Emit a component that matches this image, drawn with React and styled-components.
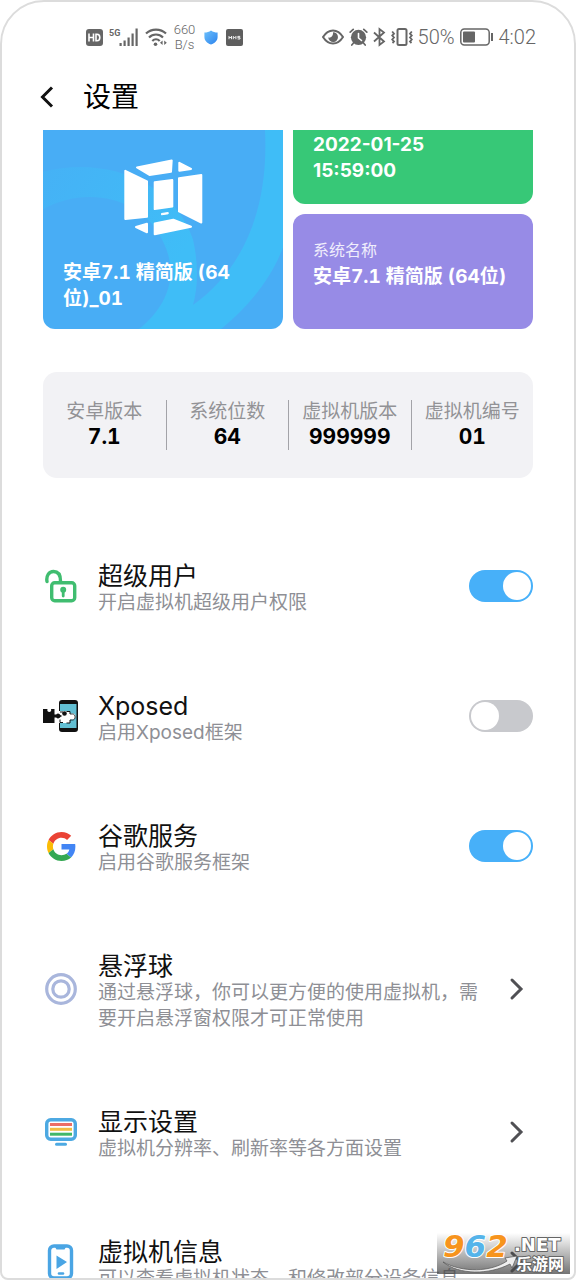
import { useState } from "react";
import styled, { createGlobalStyle, css } from "styled-components";

const GlobalStyle = createGlobalStyle`
  * {
    box-sizing: border-box;
  }
  body {
    margin: 0;
    background: #fff;
    font-family: Inter, "Noto Sans CJK SC", sans-serif;
    color: #000;
  }
`;

const Screen = styled.div`
  position: relative;
  height: 100vh;
  border: 2px solid #dcdcdc;
  border-radius: 44px 44px 8px 8px;
  overflow: hidden;
  display: flex;
  flex-direction: column;
`;

const StatusBar = styled.header`
  display: flex;
  justify-content: space-between;
  align-items: center;
  height: 44px;
  margin-top: 13px;
  padding: 0 38px 0 84px;
  flex-shrink: 0;
  color: #666;
`;

const StatusGroup = styled.div`
  display: flex;
  align-items: center;
  gap: ${(props) => props.$gap}px;
`;

const Speed = styled.span`
  width: 23px;
  font-family: Roboto, sans-serif;
  font-size: 13px;
  font-weight: 300;
  line-height: 15px;
  text-align: center;
`;

const StatusText = styled.span`
  font-family: Roboto, sans-serif;
  font-weight: 300;
  font-size: 20px;
  line-height: 24px;
`;

const TitleBar = styled.div`
  display: flex;
  align-items: center;
  gap: 28px;
  height: 71px;
  padding: 4px 37px 0;
  flex-shrink: 0;
`;

const BackButton = styled.button`
  display: flex;
  padding: 0;
  border: 0;
  background: none;
  color: #111;
`;

const Title = styled.h1`
  margin: 0;
  font-size: 28px;
  line-height: 40px;
  font-weight: 400;
`;

const Content = styled.main`
  flex: 1;
  min-height: 0;
  overflow: hidden;
  padding: 0 41px;
`;

const Cards = styled.section`
  display: grid;
  grid-template-columns: 1fr 1fr;
  grid-template-rows: 74px 115px;
  gap: 10px;
`;

const Card = styled.div`
  display: flex;
  flex-direction: column;
  justify-content: ${(props) => props.$justify || "flex-start"};
  padding: ${(props) => props.$pad};
  border-radius: ${(props) => (props.$cut ? "0 0 12px 12px" : "12px")};
  background: ${(props) => props.$color};
  color: #fff;
`;

const SystemCard = styled(Card)`
  position: relative;
  grid-row: span 2;
  overflow: hidden;
`;

const CardWave = styled.svg`
  position: absolute;
  inset: 0;
  width: 100%;
  height: 100%;
`;

const CardLogo = styled.svg`
  position: relative;
  align-self: center;
  margin-bottom: 23px;
`;

const CardText = styled.div`
  position: relative;
  font-size: 19px;
  line-height: 26px;
  font-weight: 700;
  font-variant-numeric: ${(props) => (props.$tabular ? "tabular-nums" : "normal")};
`;

const CardLabel = styled.div`
  font-size: 16px;
  line-height: 28px;
  opacity: 0.85;
`;

const Stats = styled.dl`
  display: grid;
  grid-template-columns: repeat(4, 1fr);
  margin: 43px 0 0;
  padding: 28px 0;
  border-radius: 14px;
  background: #f2f2f5;
`;

const Stat = styled.div`
  height: 50px;
  text-align: center;
  white-space: nowrap;

  & + & {
    border-left: 1px solid #a3a3a8;
  }
`;

const StatLabel = styled.dt`
  font-size: 19px;
  line-height: 24px;
  color: #929296;
`;

const StatValue = styled.dd`
  margin: 0;
  font-size: 21px;
  line-height: 26px;
  font-weight: 700;
  font-variant-numeric: tabular-nums;
`;

const List = styled.ul`
  list-style: none;
  margin: 78px 0 0;
  padding: 0;
  display: flex;
  flex-direction: column;
  gap: 70px;
`;

const rowStyle = css`
  display: flex;
  align-items: center;
  width: 100%;
  color: inherit;
  text-decoration: none;
`;

const RowLabel = styled.label`
  ${rowStyle}
`;

const RowLink = styled.a`
  ${rowStyle}
`;

const RowIcon = styled.span`
  display: flex;
  justify-content: center;
  width: 36px;
  margin-right: 19px;
  flex-shrink: 0;
`;

const RowText = styled.span`
  display: flex;
  flex-direction: column;
  flex: 1;
  min-width: 0;
  max-width: 394px;
  padding-top: 6px;
`;

const RowTitle = styled.span`
  font-size: 25px;
  line-height: 28px;
  color: #111;
`;

const RowHint = styled.span`
  font-size: 19px;
  line-height: 26px;
  color: #8e8f95;
`;

const Switch = styled.input`
  appearance: none;
  display: flex;
  align-items: center;
  width: 64px;
  height: 32px;
  margin: 0 0 0 auto;
  padding: 0 2px;
  border-radius: 16px;
  background: #c8c9cd;
  flex-shrink: 0;

  &::before {
    content: "";
    width: 28px;
    height: 28px;
    border-radius: 50%;
    background: #fff;
  }

  &:checked {
    background: #47b0f9;
  }

  &:checked::before {
    margin-left: auto;
  }
`;

const Arrow = styled.svg`
  margin: 0 8px 0 auto;
  flex-shrink: 0;
`;

const Watermark = styled.div`
  position: absolute;
  right: 4px;
  bottom: 4px;
  display: flex;
  width: 133px;
  height: 41px;
  background: linear-gradient(rgba(255, 255, 255, 0), rgba(70, 70, 70, 0.75));
`;

const HdIcon = () => (
  <svg width="17" height="17" viewBox="0 0 17 17">
    <rect width="17" height="17" rx="3" fill="#666" />
    <path d="M3 4.500v8M7.500 4.500v8M3 8.500h4.500M10 5.200v6.600h1c1.800 0 2.800-1.200 2.800-3.300s-1-3.300-2.800-3.300z" fill="none" stroke="#fff" strokeWidth="1.600" />
  </svg>
);

const SignalIcon = () => (
  <svg width="30" height="20" viewBox="0 0 30 20" fill="#666">
    <text x="0" y="9" fontFamily="Roboto" fontSize="9" fontWeight="700">
      5G
    </text>
    <path d="M10.500 16h2.200v3h-2.200zM14.500 13.500h2.200V19h-2.200zM18.500 10.500h2.200V19h-2.200zM22.500 6.500h2.200V19h-2.200zM26.500 1.500h2.200V19h-2.200z" />
  </svg>
);

const WifiIcon = () => (
  <svg width="22" height="20" viewBox="0 0 22 20" fill="none" stroke="#666" strokeWidth="2.200">
    <path d="M1 6.500c5.500-5.300 14.500-5.300 20 0M4 10.500c4-4 10-4 14 0M7.300 14c2.200-2.200 5.200-2.200 7.400 0" />
    <circle cx="10.500" cy="17.200" r="1.800" fill="#666" stroke="none" />
    <path d="M17.600 13.500v4.500l-2.600-2.200zM19.200 13.500v4.500l2.600-2.200z" fill="#666" stroke="none" />
  </svg>
);

const ShieldIcon = () => (
  <svg width="18" height="15" viewBox="-2 0 18 15">
    <defs>
      <linearGradient id="shield" x1="0" y1="0" x2="1" y2="1">
        <stop offset="0" stopColor="#6cc0fb" />
        <stop offset="1" stopColor="#2c83ee" />
      </linearGradient>
    </defs>
    <path d="M7 .5C9 2 11 2.500 13.600 2.600V7c0 3.500-2.500 6-6.600 7.500C2.900 13 .4 10.500.4 7V2.600C3 2.500 5 2 7 .5z" fill="url(#shield)" />
  </svg>
);

const HmsIcon = () => (
  <svg width="17" height="17" viewBox="0 0 17 17">
    <rect width="17" height="17" rx="2" fill="#5e5e5e" />
    <path d="M3 7v3.200M5.500 7v3.200M3 8.500h2.500M7.300 10.200V7.400l1.300 1.500 1.300-1.500v2.800M14.200 7.400h-2.400v1.300h2.200v1.300h-2.400" fill="none" stroke="#eee" strokeWidth="1" />
  </svg>
);

const EyeIcon = () => (
  <svg width="22" height="16" viewBox="0 0 22 16" fill="none" stroke="#666" strokeWidth="2">
    <path d="M1 8C3.500 4 7 1.500 11 1.500S18.500 4 21 8c-2.500 4-6 6.500-10 6.500S3.500 12 1 8z" />
    <path d="M11 3.200a4.900 4.900 0 1 1-4.800 5.300c2.800.8 5.300-2 4.800-5.300z" fill="#666" stroke="none" />
  </svg>
);

const AlarmIcon = () => (
  <svg width="19" height="18" viewBox="0 0 19 18" fill="none" stroke="#666" strokeWidth="1.700" strokeLinecap="round">
    <circle cx="9.500" cy="9.300" r="7.600" fill="#666" stroke="none" />
    <path d="M1.200 4.200 4.200 1.400M17.800 4.200 14.800 1.400M4.500 15 2.800 17M14.500 15 16.200 17" />
    <path d="M9.500 5.500V10l3 2.500" stroke="#fff" strokeWidth="1.600" />
  </svg>
);

const BluetoothIcon = () => (
  <svg width="13" height="20" viewBox="0 0 13 20" fill="none" stroke="#666" strokeWidth="1.800">
    <path d="M1 5.500 11 14.500 6.500 18V2L11 5.500 1 14.500" />
  </svg>
);

const VibrateIcon = () => (
  <svg width="22" height="18" viewBox="0 0 22 18" fill="none" stroke="#666" strokeWidth="2">
    <rect x="6.500" y="1" width="9" height="16" rx="1.500" />
    <path d="M1.200 3.500 3 5.700 1.200 7.500 3 9.500 1.200 11.500 3 13.500 1.500 15M20.800 3.500 19 5.700 20.800 7.500 19 9.500 20.800 11.500 19 13.500 20.500 15" strokeWidth="1.800" />
  </svg>
);

const BatteryIcon = () => (
  <svg width="34" height="18" viewBox="0 0 34 18">
    <rect x=".8" y="1" width="28.400" height="16" rx="3.500" fill="none" stroke="#666" strokeWidth="1.500" />
    <rect x="3" y="3.500" width="12" height="11" rx="1" fill="#666" />
    <path d="M32 5v8" stroke="#666" strokeWidth="2" />
  </svg>
);

const CubeLogo = () => (
  <CardLogo width="80" height="80" viewBox="0 0 80 80" fill="#fff" stroke="#fff" strokeWidth="2" strokeLinejoin="round">
    <path d="M14 10.500 48.700 3.500 48 14.800 26.500 18zM56.300 5.800 68 12l-11.700 1.700z" />
    <path d="M2.300 13.800 24 24.300v35.500L2.300 62zM56 21.200 78.300 18v47.500L56 54.400z" />
    <path d="M31.700 25.200 49.300 23v26.500L31.700 52zM31.700 66.500 50.300 62.700 68 69.700 31.700 77.200zM13 70l11-3.200v8.500z" />
    <path d="M38.500 56.500 45.200 55.500v1.300l-6.700 1z" strokeWidth="1" />
  </CardLogo>
);

const LockIcon = () => (
  <svg width="32" height="34" viewBox="0 0 32 34" fill="none" stroke="#40bd70" strokeWidth="3.400" strokeLinecap="round">
    <rect x="6.700" y="13.700" width="23" height="18" rx="3" />
    <path d="M2 12.500C1 7 4 2.500 8.500 2.500c4.500 0 7 3.500 7 9.500" />
    <path d="M18.200 21.500v5.500" strokeWidth="2.800" />
    <circle cx="18.200" cy="20.800" r="1.800" strokeWidth="2.400" />
  </svg>
);

const XposedIcon = () => (
  <svg width="36" height="32" viewBox="0 0 36 32">
    <rect x="16" y="0" width="19" height="32" rx="3" fill="#111" />
    <path d="M17 4h16.500v24H17z" fill="#62bfd3" />
    <path d="M15 11h12v2.500h3c3.500 0 3.500 6 0 6h-3V23H15z" fill="#fff" />
    <path d="M17 12h3M23.500 11.500H27v2.500M27 20v3h-3.500M20 22.500h-3v-3" fill="none" stroke="#111" />
    <path d="M27 14h2.500c3.500 0 3.500 6 0 6H27" fill="none" stroke="#111" strokeWidth=".8" />
    <circle cx="21.500" cy="13.500" r="2.300" fill="#111" />
    <path d="M0 9h4.500c-1.500 4 5 4 3.500 0h3.500v5.500h1.700a2.400 2.400 0 1 1 0 3h-1.700V23H0z" fill="#111" />
    <path d="M16 16h2.500" stroke="#111" strokeWidth="1.500" />
  </svg>
);

const GoogleIcon = () => (
  <svg width="29" height="29" viewBox="0 0 48 48">
    <path fill="#EA4335" d="M24 9.500c3.540 0 6.710 1.220 9.210 3.600l6.850-6.850C35.900 2.380 30.470 0 24 0 14.620 0 6.510 5.380 2.560 13.220l7.980 6.190C12.430 13.720 17.740 9.500 24 9.500z" />
    <path fill="#4285F4" d="M46.980 24.550c0-1.570-.15-3.090-.38-4.550H24v9.020h12.940c-.58 2.960-2.260 5.480-4.780 7.180l7.730 6c4.510-4.180 7.090-10.360 7.090-17.650z" />
    <path fill="#FBBC05" d="M10.530 28.590c-.48-1.450-.76-2.990-.76-4.590s.27-3.140.76-4.590l-7.980-6.190C.92 16.460 0 20.120 0 24c0 3.880.92 7.540 2.560 10.780l7.970-6.190z" />
    <path fill="#34A853" d="M24 48c6.480 0 11.930-2.130 15.890-5.810l-7.730-6c-2.150 1.450-4.920 2.300-8.160 2.300-6.260 0-11.570-4.220-13.470-9.910l-7.980 6.190C6.510 42.620 14.620 48 24 48z" />
  </svg>
);

const BallIcon = () => (
  <svg width="32" height="32" viewBox="0 0 32 32" fill="none" stroke="#a9b6dc" strokeWidth="3.200">
    <circle cx="16" cy="16" r="14.300" />
    <circle cx="16" cy="16" r="8.200" />
  </svg>
);

const DisplayIcon = () => (
  <svg width="32" height="28" viewBox="0 0 32 28" strokeLinecap="round">
    <rect x="1.700" y="1.700" width="28.600" height="19.600" rx="4" fill="none" stroke="#4da9e2" strokeWidth="3.400" />
    <path d="M11.500 26.300h9" stroke="#4da9e2" strokeWidth="3" />
    <g strokeWidth="3" strokeLinecap="butt">
      <path d="M5 6.500h22" stroke="#ec6e65" />
      <path d="M5 11.300h22" stroke="#f2bd42" />
      <path d="M5 16.200h22" stroke="#40b768" />
    </g>
  </svg>
);

const PhoneIcon = () => (
  <svg width="28" height="36" viewBox="0 0 28 36">
    <rect x="2.500" y="2" width="22" height="32" rx="4.500" fill="none" stroke="#4aa5e4" strokeWidth="3.400" />
    <path d="M8 3h11l-1.500 2.500h-8zM9.500 11.500 20 18 9.500 25z" fill="#4aa5e4" />
    <path d="M12 29.500h4" stroke="#4aa5e4" strokeWidth="2.600" strokeLinecap="round" />
  </svg>
);

const Chevron = () => (
  <Arrow width="16" height="24" viewBox="0 0 16 24" fill="none" stroke="#505054" strokeWidth="3" strokeLinecap="round">
    <path d="M3 3 12 12 3 21" />
  </Arrow>
);

const stats = [
  { label: "安卓版本", value: "7.1" },
  { label: "系统位数", value: "64" },
  { label: "虚拟机版本", value: "999999" },
  { label: "虚拟机编号", value: "01" },
];

const rows = [
  { id: "root", icon: LockIcon, title: "超级用户", hint: "开启虚拟机超级用户权限", toggle: true, on: true },
  { id: "xposed", icon: XposedIcon, title: "Xposed", hint: "启用Xposed框架", toggle: true, on: false },
  { id: "google", icon: GoogleIcon, title: "谷歌服务", hint: "启用谷歌服务框架", toggle: true, on: true },
  { id: "ball", icon: BallIcon, title: "悬浮球", hint: "通过悬浮球，你可以更方便的使用虚拟机，需要开启悬浮窗权限才可正常使用" },
  { id: "display", icon: DisplayIcon, title: "显示设置", hint: "虚拟机分辨率、刷新率等各方面设置" },
  { id: "info", icon: PhoneIcon, title: "虚拟机信息", hint: "可以查看虚拟机状态，和修改部分设备信息" },
];

const SettingRow = ({ row }) => {
  const [on, setOn] = useState(row.on);
  const Icon = row.icon;

  const body = (
    <>
      <RowIcon>
        <Icon />
      </RowIcon>
      <RowText>
        <RowTitle>{row.title}</RowTitle>
        <RowHint>{row.hint}</RowHint>
      </RowText>
    </>
  );

  if (row.toggle) {
    return (
      <RowLabel htmlFor={row.id}>
        {body}
        <Switch id={row.id} type="checkbox" checked={on} onChange={() => setOn(!on)} />
      </RowLabel>
    );
  }

  return (
    <RowLink href={`#${row.id}`}>
      {body}
      <Chevron />
    </RowLink>
  );
};

const App = () => (
  <>
    <GlobalStyle />
    <Screen>
      <StatusBar>
        <StatusGroup $gap={6}>
          <HdIcon />
          <SignalIcon />
          <WifiIcon />
          <Speed>660 B/s</Speed>
          <ShieldIcon />
          <HmsIcon />
        </StatusGroup>
        <StatusGroup $gap={5}>
          <EyeIcon />
          <AlarmIcon />
          <BluetoothIcon />
          <VibrateIcon />
          <StatusText>50%</StatusText>
          <BatteryIcon />
          <StatusText>4:02</StatusText>
        </StatusGroup>
      </StatusBar>
      <TitleBar>
        <BackButton type="button" aria-label="返回">
          <svg width="16" height="24" viewBox="0 0 16 24" fill="none" stroke="currentColor" strokeWidth="3">
            <path d="M13 2.500 3.500 12 13 21.500" />
          </svg>
        </BackButton>
        <Title>设置</Title>
      </TitleBar>
      <Content>
        <Cards>
          <SystemCard $cut $color="#48adf5" $justify="flex-end" $pad="0 20px 17px">
            <CardWave viewBox="0 0 240 200" preserveAspectRatio="none">
              <defs>
                <linearGradient id="wave" x1="0" y1="0" x2="1" y2="0.600">
                  <stop offset="0.100" stopColor="#3fbdf7" stopOpacity="0.300" />
                  <stop offset="0.700" stopColor="#3fbdf7" />
                </linearGradient>
              </defs>
              <path d="M0 42C60 26 130 50 150 110q8 36 0 66C200 140 226 80 222 0h18v118c-12 32-35 60-62 82H96c30-24 40-56 24-88C100 66 40 56 0 80z" fill="url(#wave)" />
            </CardWave>
            <CubeLogo />
            <CardText $tabular>安卓7.1 精简版 (64位)_01</CardText>
          </SystemCard>
          <Card $cut $color="#37c877" $pad="2px 20px">
            <CardText>
              2022-01-25
              <br />
              15:59:00
            </CardText>
          </Card>
          <Card $color="#978be6" $pad="22px 20px">
            <CardLabel>系统名称</CardLabel>
            <CardText $tabular>安卓7.1 精简版 (64位)</CardText>
          </Card>
        </Cards>
        <Stats>
          {stats.map((stat) => (
            <Stat key={stat.label}>
              <StatLabel>{stat.label}</StatLabel>
              <StatValue>{stat.value}</StatValue>
            </Stat>
          ))}
        </Stats>
        <List>
          {rows.map((row) => (
            <li key={row.id}>
              <SettingRow row={row} />
            </li>
          ))}
        </List>
      </Content>
      <Watermark>
        <svg width="133" height="41" viewBox="0 0 133 41" strokeLinejoin="round">
          <g fontFamily="DejaVu Sans" fontWeight="700" fontStyle="italic" fontSize="31" stroke="#fff" strokeWidth="2" paintOrder="stroke">
            <text x="6" y="24">
              <tspan fill="#f7941d">9</tspan>
              <tspan fill="#55b4ea">6</tspan>
              <tspan fill="#f7941d">2</tspan>
            </text>
          </g>
          <path d="M6 29c20 11 48 10 64-1l-2-3 12-2-5 12-2-4C52 42 22 42 6 29z" fill="#eee" stroke="#555" strokeWidth=".7" />
          <g fontWeight="700" fill="#fff" stroke="#666" strokeWidth="2" paintOrder="stroke">
            <text x="77" y="18" fontFamily="DejaVu Sans" fontSize="18">
              .NET
            </text>
            <text x="79" y="37" fontFamily="Noto Sans CJK SC" fontSize="16">
              乐游网
            </text>
          </g>
        </svg>
      </Watermark>
    </Screen>
  </>
);

export default App;
